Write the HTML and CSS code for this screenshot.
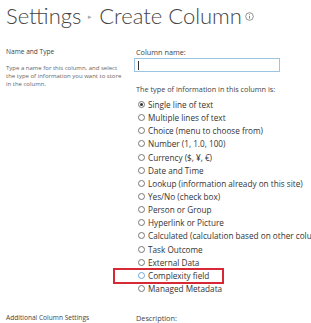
FILE: index.html
```html
<!DOCTYPE html>
<html lang="en">
  <head>
    <meta charset="UTF-8" />
    <title>Create Column</title>
    <link rel="stylesheet" href="styles.css">
  </head>
  <body>
    <h1 class="title">
      <span>Settings</span>
      <span class="crumb">&#9656;</span>
      <span>Create Column</span>
      <svg class="info" width="9" height="9" viewBox="0 0 9 9">
        <circle cx="4.5" cy="4.5" r="3.8" fill="none" stroke="#777" stroke-width="0.8"/>
        <line x1="4.5" y1="4" x2="4.5" y2="6.6" stroke="#777" stroke-width="0.9"/>
        <circle cx="4.5" cy="2.7" r="0.5" fill="#777"/>
      </svg>
    </h1>

    <div class="section">
      <div class="side">
        <h3>Name and Type</h3>
        <p>Type a name for this column, and select<br>the type of information you want to store<br>in the column.</p>
      </div>
      <div class="main">
        <label class="label">Column name:</label>
        <div class="input"><span class="caret"></span></div>

        <div class="label type-label">The type of information in this column is:</div>
        <ul class="types">
          <li><span class="radio checked"></span>Single line of text</li>
          <li><span class="radio"></span>Multiple lines of text</li>
          <li><span class="radio"></span>Choice (menu to choose from)</li>
          <li><span class="radio"></span>Number (1, 1.0, 100)</li>
          <li><span class="radio"></span>Currency ($, &yen;, &euro;)</li>
          <li><span class="radio"></span>Date and Time</li>
          <li><span class="radio"></span>Lookup (information already on this site)</li>
          <li><span class="radio"></span>Yes/No (check box)</li>
          <li><span class="radio"></span>Person or Group</li>
          <li><span class="radio"></span>Hyperlink or Picture</li>
          <li><span class="radio"></span>Calculated (calculation based on other columns)</li>
          <li><span class="radio"></span>Task Outcome</li>
          <li><span class="radio"></span>External Data</li>
          <li class="marked"><span class="radio hover"></span>Complexity field</li>
          <li><span class="radio"></span>Managed Metadata</li>
        </ul>
      </div>
    </div>

    <div class="section extra">
      <div class="side">
        <h3>Additional Column Settings</h3>
      </div>
      <div class="main">
        <div class="label">Description:</div>
      </div>
    </div>
  </body>
</html>
```

FILE: styles.css
```css
body {
  margin: 0;
  padding: 0 0 0 6px;
  font-family: "Open Sans", "Noto Sans", sans-serif;
  color: #444;
  background: white;
  overflow: hidden;
  white-space: nowrap;
}
.title {
  margin: 0;
  padding-top: 1px;
  font-family: "Lato", "Open Sans", sans-serif;
  font-size: 22px;
  font-weight: 300;
  color: #444;
  display: flex;
  align-items: center;
  height: 28px;
}
.title .crumb {
  font-size: 7px;
  color: #aaa;
  margin: 2px 7px 0 7px;
}
.title .info {
  margin: 3px 0 0 3px;
}
.section {
  display: grid;
  grid-template-columns: 130px 1fr;
  margin-top: 17px;
}
.side h3 {
  margin: 0;
  font-size: 6.6px;
  font-weight: 400;
  color: #444;
  line-height: 12px;
}
.side p {
  margin: 6px 0 0;
  font-size: 6px;
  line-height: 8px;
  color: #666;
}
.label {
  display: block;
  font-size: 7.3px;
  line-height: 12px;
  color: #444;
}
.input {
  width: 144px;
  height: 12px;
  border: 1px solid #9cc5e3;
  margin: 0 0 0 -2px;
  display: flex;
  align-items: center;
}
.caret {
  width: 1px;
  height: 9px;
  background: #333;
  margin-left: 3px;
}
.type-label {
  margin-top: 11px;
}
.types {
  list-style: none;
  margin: 3px 0 0 2px;
  padding: 0;
}
.types li {
  display: flex;
  align-items: center;
  height: 13.15px;
  font-size: 8.2px;
  color: #333;
}
.radio {
  width: 7px;
  height: 7px;
  border: 1px solid #777;
  border-radius: 50%;
  margin: 0 3px 0 0;
  box-sizing: border-box;
  display: flex;
  align-items: center;
  justify-content: center;
  background: white;
}
.radio.checked::after {
  content: "";
  width: 3px;
  height: 3px;
  border-radius: 50%;
  background: #333;
}
.radio.hover {
  border-color: #6fa8d6;
}
.types li.marked {
  position: relative;
}
.types li.marked::before {
  content: "";
  position: absolute;
  left: -25px;
  top: -1px;
  width: 111px;
  height: 16px;
  border: 2px solid #d62935;
  box-sizing: border-box;
}
.extra {
  margin-top: 17px;
}
```
